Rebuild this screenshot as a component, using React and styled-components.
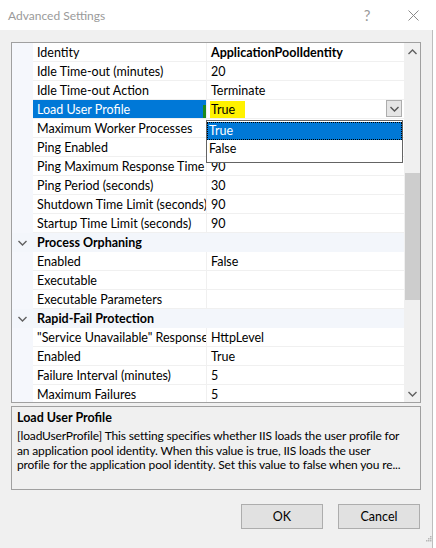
import React from "react";
import styled, { createGlobalStyle } from "styled-components";

const Global = createGlobalStyle`
  html, body { margin: 0; padding: 0; background: #ffffff; }
  body { font-family: Lato, "Noto Sans", sans-serif; font-size: 12px; color: #000; }
  * { box-sizing: border-box; }
`;

const FONT = `Lato, "Noto Sans", sans-serif`;

const Win = styled.div`
  width: 436px;
  height: 548px;
  display: flex;
  flex-direction: column;
  background: #ffffff;
  overflow: hidden;
`;

const TitleBar = styled.div`
  height: 30px;
  display: flex;
  align-items: center;
  padding-left: 8px;
  background: #ffffff;
  font-family: ${FONT};
  font-size: 12px;
  color: #9a9a9a;
`;

const TitleText = styled.div`
  flex: 1;
`;

const TitleBtn = styled.div`
  width: 46px;
  height: 30px;
  display: flex;
  align-items: center;
  justify-content: center;
  color: #9a9a9a;
  font-size: 15px;
`;

const Body = styled.div`
  flex: 1;
  width: 433px;
  background: #f0f0f0;
  border-right: 1px solid #bdbdbd;
  padding: 12px 12px 0 11px;
  display: flex;
  flex-direction: column;
`;

const Grid = styled.div`
  position: relative;
  width: 410px;
  height: 361px;
  border: 1px solid #a0a0a0;
  background: #ffffff;
  display: flex;
`;

const Rows = styled.div`
  width: 392px;
  height: 100%;
  overflow: hidden;
`;

const Row = styled.div`
  display: grid;
  grid-template-columns: 21px 174px 1fr;
  height: 19px;
  font-family: ${FONT};
  font-size: 12.5px;
  line-height: 19px;
`;

const Gutter = styled.div`
  background: ${(p) => (p.$clear ? "transparent" : "#f5f7fc")};
  display: flex;
  align-items: center;
  justify-content: center;
`;

const NameCell = styled.div`
  padding-left: 4px;
  white-space: nowrap;
  overflow: hidden;
  border-bottom: 1px solid #f0f0f0;
  border-right: 1px solid #f0f0f0;
  background: ${(p) => (p.$selected ? "#0078d7" : "#ffffff")};
  color: ${(p) => (p.$selected ? "#ffffff" : "#000000")};
  position: relative;
`;

const ValueCell = styled.div`
  padding-left: 4px;
  white-space: nowrap;
  overflow: hidden;
  border-bottom: 1px solid #f0f0f0;
  font-weight: ${(p) => (p.$bold ? 700 : 400)};
  display: flex;
  align-items: center;
  position: relative;
`;

const CategoryRow = styled.div`
  display: grid;
  grid-template-columns: 21px 1fr;
  height: 19px;
  background: #f3f6fb;
  font-family: ${FONT};
  font-size: 12.5px;
  line-height: 19px;
  font-weight: 700;
`;

const CatName = styled.div`
  padding-left: 4px;
`;

const Highlight = styled.span`
  background: #fff200;
  padding: 0 10px 0 1px;
  margin-left: -1px;
  line-height: 17px;
`;

const GreenMark = styled.span`
  position: absolute;
  right: 0;
  top: 5px;
  width: 3px;
  height: 13px;
  background: #1c8a1c;
`;

const DropBtn = styled.div`
  position: absolute;
  right: 2px;
  top: 0;
  width: 16px;
  height: 17px;
  border: 1px solid #adadad;
  background: #e5e5e5;
  display: flex;
  align-items: center;
  justify-content: center;
`;

const DropList = styled.div`
  position: absolute;
  left: 194px;
  top: 77px;
  width: 197px;
  height: 43px;
  border: 1px solid #646464;
  background: #ffffff;
  font-family: ${FONT};
  font-size: 12.5px;
  line-height: 18px;
  padding-top: 1px;
`;

const DropItem = styled.div`
  height: 18px;
  padding-left: 2px;
  background: ${(p) => (p.$selected ? "#0078d7" : "transparent")};
  color: ${(p) => (p.$selected ? "#ffffff" : "#000000")};
  outline: ${(p) => (p.$selected ? "1px dotted #000" : "none")};
  outline-offset: -1px;
`;

const Scroll = styled.div`
  width: 16px;
  height: 100%;
  background: #f0f0f0;
  display: flex;
  flex-direction: column;
`;

const ScrollArrow = styled.div`
  height: 17px;
  display: flex;
  align-items: center;
  justify-content: center;
`;

const Track = styled.div`
  flex: 1;
`;

const Thumb = styled.div`
  margin-top: 113px;
  margin-left: 1px;
  width: 15px;
  height: 127px;
  background: #cdcdcd;
`;

const Desc = styled.div`
  margin-top: 3px;
  width: 410px;
  height: 84px;
  border: 1px solid #a0a0a0;
  padding: 4px 4px 0 5px;
  font-family: ${FONT};
  font-size: 12px;
  line-height: 14.5px;
  letter-spacing: -0.15px;
`;

const DescTitle = styled.div`
  font-weight: 700;
  font-size: 12.5px;
  letter-spacing: 0;
  margin-bottom: 3.5px;
`;

const DescLine = styled.div`
  white-space: nowrap;
`;

const Buttons = styled.div`
  margin-top: 14px;
  width: 409px;
  display: flex;
  justify-content: flex-end;
  gap: 15px;
`;

const Button = styled.div`
  width: 82px;
  height: 25px;
  border: 1px solid #adadad;
  background: #e1e1e1;
  display: flex;
  align-items: center;
  justify-content: center;
  font-family: ${FONT};
  font-size: 12.5px;
`;

const Grip = styled.div`
  position: absolute;
  right: 4px;
  bottom: 3px;
`;

const Outer = styled.div`
  position: relative;
`;

const Chevron = ({ dir = "down", color = "#606060" }) => (
  <svg width="9" height="6" viewBox="0 0 9 6">
    <polyline
      points={dir === "down" ? "0.5,1 4.5,5 8.5,1" : "0.5,5 4.5,1 8.5,5"}
      fill="none"
      stroke={color}
      strokeWidth="1.4"
    />
  </svg>
);

const rowsA = [
  ["Identity", "ApplicationPoolIdentity", true],
  ["Idle Time-out (minutes)", "20"],
  ["Idle Time-out Action", "Terminate"],
  ["Load User Profile", "True", false, true],
  ["Maximum Worker Processes", "1"],
  ["Ping Enabled", "True"],
  ["Ping Maximum Response Time (seconds)", "90"],
  ["Ping Period (seconds)", "30"],
  ["Shutdown Time Limit (seconds)", "90"],
  ["Startup Time Limit (seconds)", "90"],
];
const rowsB = [
  ["Enabled", "False"],
  ["Executable", ""],
  ["Executable Parameters", ""],
];
const rowsC = [
  ['"Service Unavailable" Response Type', "HttpLevel"],
  ["Enabled", "True"],
  ["Failure Interval (minutes)", "5"],
  ["Maximum Failures", "5"],
];

const descLines = [
  "[loadUserProfile] This setting specifies whether IIS loads the user profile for",
  "an application pool identity. When this value is true, IIS loads the user",
  "profile for the application pool identity. Set this value to false when you re...",
];

const PropRow = ({ name, value, bold, selected }) => (
  <Row>
    <Gutter />
    <NameCell $selected={selected}>
      {name}
      {selected && <GreenMark />}
    </NameCell>
    <ValueCell $bold={bold}>
      {selected ? (
        <>
          <Highlight>{value}</Highlight>
          <DropBtn>
            <Chevron dir="down" color="#555" />
          </DropBtn>
        </>
      ) : (
        value
      )}
    </ValueCell>
  </Row>
);

const Category = ({ name }) => (
  <CategoryRow>
    <Gutter $clear>
      <Chevron dir="down" />
    </Gutter>
    <CatName>{name}</CatName>
  </CategoryRow>
);

export default function App() {
  return (
    <Outer>
      <Global />
      <Win>
        <TitleBar>
          <TitleText>Advanced Settings</TitleText>
          <TitleBtn>?</TitleBtn>
          <TitleBtn>
            <svg width="11" height="11" viewBox="0 0 11 11">
              <path d="M0.5 0.5 L10.5 10.5 M10.5 0.5 L0.5 10.5" stroke="#8a8a8a" strokeWidth="1" />
            </svg>
          </TitleBtn>
        </TitleBar>
        <Body>
          <Grid>
            <Rows>
              {rowsA.map(([n, v, b, s]) => (
                <PropRow key={n} name={n} value={v} bold={b} selected={s} />
              ))}
              <Category name="Process Orphaning" />
              {rowsB.map(([n, v]) => (
                <PropRow key={"b" + n} name={n} value={v} />
              ))}
              <Category name="Rapid-Fail Protection" />
              {rowsC.map(([n, v]) => (
                <PropRow key={"c" + n} name={n} value={v} />
              ))}
            </Rows>
            <Scroll>
              <ScrollArrow>
                <Chevron dir="up" />
              </ScrollArrow>
              <Track>
                <Thumb />
              </Track>
              <ScrollArrow>
                <Chevron dir="down" />
              </ScrollArrow>
            </Scroll>
            <DropList>
              <DropItem $selected>True</DropItem>
              <DropItem>False</DropItem>
            </DropList>
          </Grid>
          <Desc>
            <DescTitle>Load User Profile</DescTitle>
            {descLines.map((l) => (
              <DescLine key={l}>{l}</DescLine>
            ))}
          </Desc>
          <Buttons>
            <Button>OK</Button>
            <Button>Cancel</Button>
          </Buttons>
        </Body>
      </Win>
      <Grip>
        <svg width="8" height="8" viewBox="0 0 8 8">
          {[[6, 0], [4, 2], [6, 2], [2, 4], [4, 4], [6, 4]].map(([x, y]) => (
            <rect key={x + "-" + y} x={x} y={y + 2} width="1.5" height="1.5" fill="#b8b8b8" />
          ))}
        </svg>
      </Grip>
    </Outer>
  );
}
